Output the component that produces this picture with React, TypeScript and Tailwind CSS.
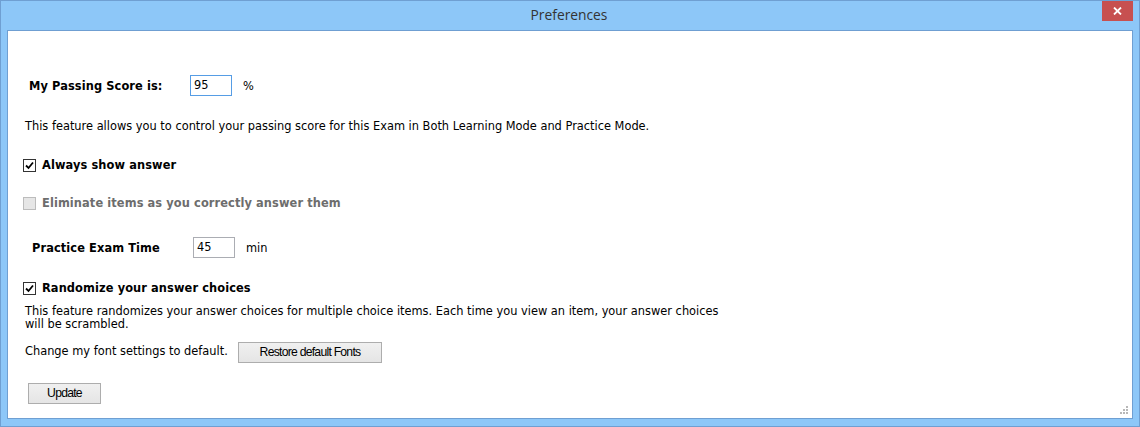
import React from 'react';

const font = { fontFamily: '"DejaVu Sans", Verdana, sans-serif' };
const btnFont = { fontFamily: '"Liberation Sans", Arial, sans-serif' };

function Check({ on, disabled }: { on?: boolean; disabled?: boolean }) {
  return (
    <span
      className={`flex h-[13px] w-[13px] shrink-0 items-center justify-center border ${disabled ? 'border-[#bcbcbc] bg-[#e6e6e6]' : 'border-[#333] bg-white'}`}
    >
      {on && (
        <svg width="9" height="9" viewBox="0 0 9 9">
          <path d="M1 4.5 L3.5 7 L8 1.5" stroke="#000" strokeWidth="1.8" fill="none" />
        </svg>
      )}
    </span>
  );
}

function Btn({ children, w }: { children: React.ReactNode; w: string }) {
  return (
    <button
      style={btnFont}
      className={`${w} h-[21px] border border-[#adadad] bg-gradient-to-b from-[#f0f0f0] to-[#e5e5e5] text-[12.2px] tracking-[-0.75px] text-black`}
    >
      {children}
    </button>
  );
}

export default function App() {
  return (
    <div className="relative flex h-[427px] w-[1140px] flex-col border border-[#6f9fd2] bg-[#8dc7f8]">
      <div className="flex h-[29px] shrink-0 items-center justify-center pr-[2px]">
        <span style={{ fontFamily: '"Open Sans", "Noto Sans", sans-serif' }} className="text-[13.8px] text-[#333]">
          Preferences
        </span>
      </div>
      <button className="absolute right-[6px] top-0 flex h-[20px] w-[31px] items-center justify-center bg-[#c75050]">
        <svg width="9" height="8" viewBox="0 0 9 8">
          <path d="M1 0.5 L8 7.5 M8 0.5 L1 7.5" stroke="#fff" strokeWidth="1.8" />
        </svg>
      </button>

      <div style={font} className="relative mx-[6px] h-[389px] border border-[#6f9fd2] bg-white text-[11.4px] text-black">
        <div className="ml-[21px] mt-[44px] flex h-[21px] items-center">
          <span className="w-[161px] pt-[3px] font-bold tracking-[0.1px]">My Passing Score is:</span>
          <div className="flex h-[21px] w-[42px] items-center border border-[#569de5] px-[3px]">95</div>
          <span className="ml-[11px] pt-[3px]">%</span>
        </div>

        <div className="ml-[17px] mt-[24px] h-[13px] leading-[13px]">
          This feature allows you to control your passing score for this Exam in Both Learning Mode and Practice Mode.
        </div>

        <div className="ml-[15px] mt-[26px] flex h-[13px] items-center gap-[6px]">
          <Check on />
          <span className="font-bold tracking-[0.1px]">Always show answer</span>
        </div>

        <div className="ml-[15px] mt-[25px] flex h-[13px] items-center gap-[6px]">
          <Check disabled />
          <span className="font-bold tracking-[0.1px] text-[#6d6d6d]">Eliminate items as you correctly answer them</span>
        </div>

        <div className="ml-[24px] mt-[27px] flex h-[21px] items-center">
          <span className="w-[161px] pt-[3px] font-bold tracking-[0.1px]">Practice Exam Time</span>
          <div className="flex h-[21px] w-[42px] items-center border border-[#abadb3] px-[3px]">45</div>
          <span className="ml-[11px] pt-[2px]">min</span>
        </div>

        <div className="ml-[15px] mt-[24px] flex h-[13px] items-center gap-[6px]">
          <Check on />
          <span className="font-bold tracking-[0.1px]">Randomize your answer choices</span>
        </div>

        <div className="ml-[17px] mt-[10px] w-[720px] leading-[13px]">
          This feature randomizes your answer choices for multiple choice items. Each time you view an item, your answer choices
          <br />
          will be scrambled.
        </div>

        <div className="ml-[17px] mt-[11px] flex h-[21px] items-start">
          <span className="mt-[1px] w-[213px]">Change my font settings to default.</span>
          <Btn w="w-[144px]">Restore default Fonts</Btn>
        </div>

        <div className="ml-[20px] mt-[20px]">
          <Btn w="w-[73px]">Update</Btn>
        </div>

        <svg className="absolute bottom-[3px] right-[3px]" width="9" height="9" viewBox="0 0 9 9">
          {[
            [6, 0],
            [3, 3],
            [6, 3],
            [0, 6],
            [3, 6],
            [6, 6],
          ].map(([x, y], i) => (
            <rect key={i} x={x} y={y} width="2" height="2" fill="#b8b8b8" />
          ))}
        </svg>
      </div>
    </div>
  );
}
